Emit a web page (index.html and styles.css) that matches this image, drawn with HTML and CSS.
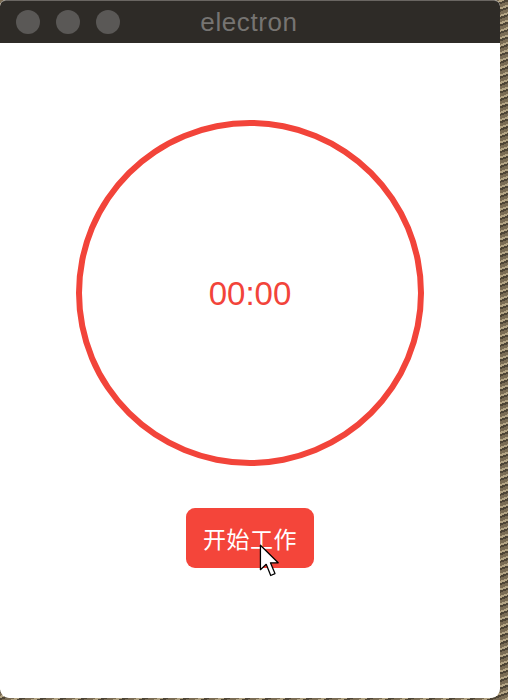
FILE: index.html
```html
<!DOCTYPE html>
<html lang="zh">
<head>
<meta charset="utf-8">
<title>electron</title>
<link rel="stylesheet" href="styles.css">
</head>
<body>
<div class="desktop">
  <div class="window">
    <div class="titlebar">
      <div class="lights">
        <span class="light"></span>
        <span class="light"></span>
        <span class="light"></span>
      </div>
      <div class="title">electron</div>
    </div>
    <div class="content">
      <div class="ring">
        <span class="time">00:00</span>
      </div>
      <div class="btn-wrap">
        <button class="start">开始工作</button>
        <svg class="cursor" width="26" height="36" viewBox="0 0 20 28">
          <path d="M1 1 L1 20 L5.5 15.8 L9 24.5 L12.3 23 L8.8 14.6 L14.8 14.6 Z" fill="#fff" stroke="#000" stroke-width="1" stroke-linejoin="round"/>
        </svg>
      </div>
    </div>
  </div>
</div>
</body>
</html>
```
FILE: styles.css
```css
html, body {
  margin: 0;
  padding: 0;
}
body {
  width: 508px;
  height: 700px;
  overflow: hidden;
  font-family: "Liberation Sans", "Noto Sans CJK SC", sans-serif;
}
.desktop {
  width: 508px;
  height: 700px;
  background: repeating-linear-gradient(160deg, #7a6c54 0 3px, #b2a383 3px 5px, #4e4536 5px 7px);
}
.window {
  width: 500px;
  height: 698px;
  background: #fff;
  border-radius: 6px 6px 9px 9px;
  overflow: hidden;
  display: flex;
  flex-direction: column;
}
.titlebar {
  height: 43px;
  flex: none;
  background: #2e2b27;
  border-top: 1px solid #6a6662;
  box-sizing: border-box;
  border-radius: 6px 6px 0 0;
  position: relative;
  display: flex;
  align-items: center;
  justify-content: center;
}
.lights {
  position: absolute;
  left: 16px;
  top: 9px;
  display: flex;
  gap: 16px;
}
.light {
  width: 24px;
  height: 24px;
  border-radius: 50%;
  background: #5a5856;
}
.title {
  color: #767472;
  font-size: 26px;
  letter-spacing: 0.6px;
  margin-left: -2px;
}
.content {
  flex: 1;
  display: flex;
  flex-direction: column;
  align-items: center;
  padding-top: 77px;
}
.ring {
  width: 348px;
  height: 346px;
  box-sizing: border-box;
  border: 6px solid #f2443a;
  border-radius: 50%;
  display: flex;
  align-items: center;
  justify-content: center;
}
.time {
  color: #f2443a;
  font-size: 33px;
  margin-top: 2px;
}
.btn-wrap {
  position: relative;
  margin-top: 42px;
}
.start {
  width: 128px;
  height: 60px;
  border: none;
  border-radius: 9px;
  background: #f4453a;
  color: #fff;
  font-family: "Noto Sans CJK SC", sans-serif;
  font-size: 23px;
  letter-spacing: 0.5px;
  padding: 0;
  display: block;
}
.cursor {
  position: absolute;
  left: 73px;
  top: 36px;
}
```
